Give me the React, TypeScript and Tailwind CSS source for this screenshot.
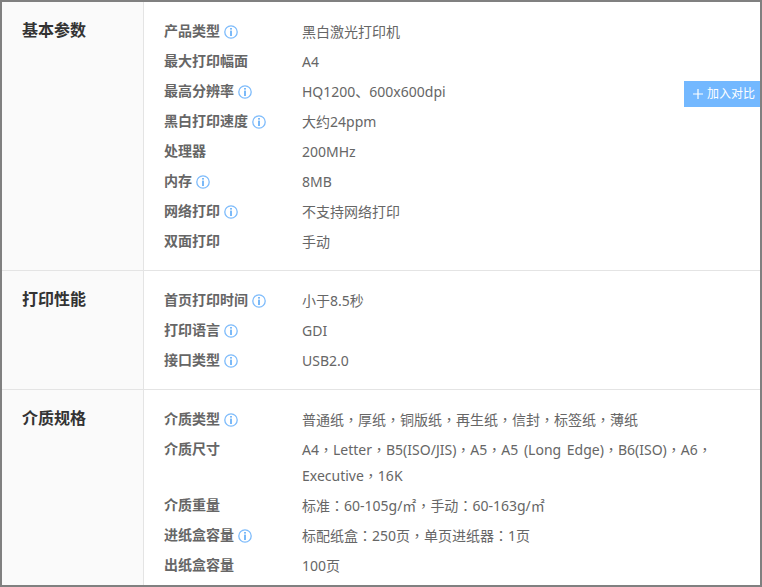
const F = "[font-family:'Noto_Sans','Noto_Sans_CJK_SC',sans-serif]";

function Info() {
  return (
    <svg width="14" height="14" viewBox="0 0 14 14" className="ml-[4px] mt-[3px] shrink-0">
      <circle cx="7" cy="7" r="6.2" fill="none" stroke="#7dbbfb" strokeWidth="1.3" />
      <rect x="6.2" y="3" width="1.6" height="1.6" fill="#5aa9f7" />
      <rect x="6.2" y="5.6" width="1.6" height="5.4" fill="#5aa9f7" />
    </svg>
  );
}

function Value({ text }: { text: string }) {
  const parts = text.split(/([，：])/);
  return (
    <div className="[word-spacing:2px]">
      {parts.map((p, i) =>
        i % 2 === 1 ? (
          <span key={i} className="leading-[0] [font-family:'Noto_Sans_CJK_TC',sans-serif]">
            {p}
          </span>
        ) : (
          <span key={i}>{p}</span>
        ),
      )}
    </div>
  );
}

type Row = { k: string; v: string[]; i?: boolean };

function Section({ title, rows, last }: { title: string; rows: Row[]; last?: boolean }) {
  return (
    <div className={last ? "flex h-[195px] overflow-hidden" : "flex border-b border-[#e4e4e4]"}>
      <div className="w-[142px] shrink-0 bg-[#fafafa] border-r border-[#e4e4e4] pl-[20px] pt-[14px]">
        <div className="text-[16px] leading-[28px] font-bold text-[#333]">{title}</div>
      </div>
      <div className="flex-1 pt-[15px] pb-[13px] pl-[20px]">
        {rows.map((r) => (
          <div key={r.k} className="flex py-[2px]">
            <div className="w-[138px] shrink-0 flex items-center h-[22px] text-[14px] font-bold text-[#666]">
              {r.k}
              {r.i && <Info />}
            </div>
            <div className="text-[14px] leading-[26px] text-[#666]">
              {r.v.map((l) => (
                <Value key={l} text={l} />
              ))}
            </div>
          </div>
        ))}
      </div>
    </div>
  );
}

export default function App() {
  return (
    <div className={`relative w-[762px] h-[587px] overflow-hidden bg-white border-2 border-[#808080] ${F}`}>
      <Section
        title="基本参数"
        rows={[
          { k: "产品类型", v: ["黑白激光打印机"], i: true },
          { k: "最大打印幅面", v: ["A4"] },
          { k: "最高分辨率", v: ["HQ1200、600x600dpi"], i: true },
          { k: "黑白打印速度", v: ["大约24ppm"], i: true },
          { k: "处理器", v: ["200MHz"] },
          { k: "内存", v: ["8MB"], i: true },
          { k: "网络打印", v: ["不支持网络打印"], i: true },
          { k: "双面打印", v: ["手动"] },
        ]}
      />
      <Section
        title="打印性能"
        rows={[
          { k: "首页打印时间", v: ["小于8.5秒"], i: true },
          { k: "打印语言", v: ["GDI"], i: true },
          { k: "接口类型", v: ["USB2.0"], i: true },
        ]}
      />
      <Section
        last
        title="介质规格"
        rows={[
          { k: "介质类型", v: ["普通纸，厚纸，铜版纸，再生纸，信封，标签纸，薄纸"], i: true },
          { k: "介质尺寸", v: ["A4，Letter，B5(ISO/JIS)，A5，A5 (Long Edge)，B6(ISO)，A6，", "Executive，16K"] },
          { k: "介质重量", v: ["标准：60-105g/㎡，手动：60-163g/㎡"] },
          { k: "进纸盒容量", v: ["标配纸盒：250页，单页进纸器：1页"], i: true },
          { k: "出纸盒容量", v: ["100页"] },
        ]}
      />
      <div className="absolute left-[682px] top-[79px] w-[76px] h-[26px] bg-[#73b8ff] text-white text-[12px] flex items-center pl-[9px]">
        <svg width="10" height="10" viewBox="0 0 10 10" className="mr-[4px]">
          <path d="M5 0v10M0 5h10" stroke="#fff" strokeWidth="1.2" />
        </svg>
        加入对比
      </div>
    </div>
  );
}
